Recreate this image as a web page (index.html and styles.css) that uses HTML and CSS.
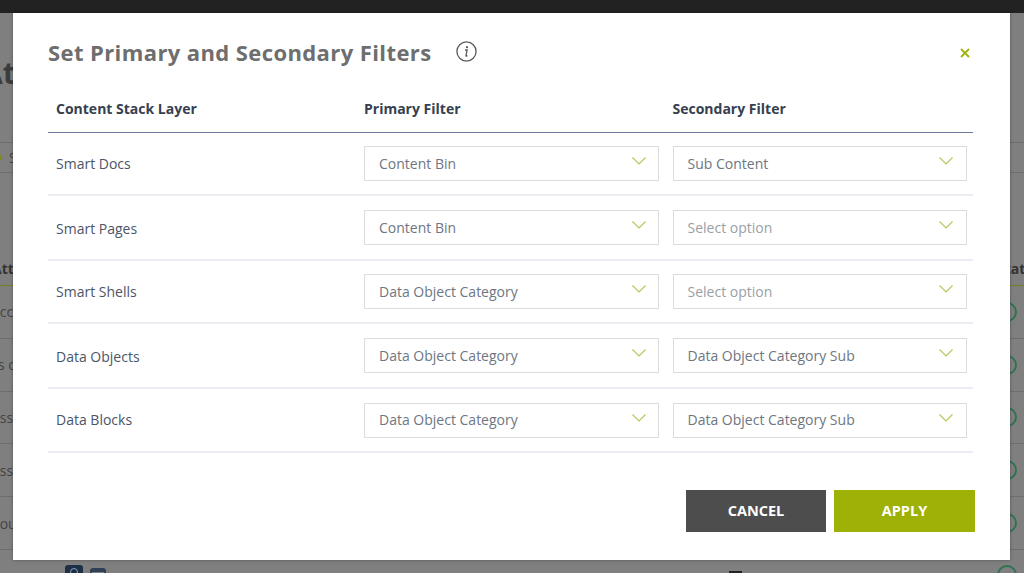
FILE: index.html
```html
<!DOCTYPE html>
<html lang="en">
<head>
<meta charset="utf-8">
<title>Set Primary and Secondary Filters</title>
<link rel="stylesheet" href="styles.css">
</head>
<body>
<div class="page">
  <div class="topbar"></div>
  <h1 class="bg-title">Attributes</h1>
  <div class="bg-filter"><span class="bg-dot"></span><span>Search</span></div>
  <div class="bg-table">
    <div class="bg-head"><span>Attribute</span><span class="bg-status">Status</span></div>
    <div class="bg-row"><span class="i9">Account</span><span class="bg-circle"></span></div>
    <div class="bg-row"><span class="i6">Is open</span><span class="bg-circle"></span></div>
    <div class="bg-row"><span class="i9">Assets</span><span class="bg-circle"></span></div>
    <div class="bg-row"><span class="i9">Assets</span><span class="bg-circle"></span></div>
    <div class="bg-row"><span class="i8">Source</span><span class="bg-circle"></span></div>
  </div>
  <div class="bg-last">
    <span class="bg-icon dark"><span class="bg-glyph"></span></span><span class="bg-icon save"></span><span class="bg-spacer"></span><span class="bg-bar"></span><span class="bg-circle"></span>
  </div>
</div>

<div class="modal">
  <header class="modal-head">
    <h2 class="modal-title">Set Primary and Secondary Filters</h2>
    <svg class="info" viewBox="0 0 21 21" width="21" height="21" aria-hidden="true">
      <circle cx="10.5" cy="10.5" r="9.6" fill="none" stroke="#5a5a5a" stroke-width="1.3"/>
      <circle cx="11" cy="6.2" r="1.1" fill="#5a5a5a"/>
      <path d="M9 9h2.1l-1.1 5.6q-.1.7.5.5l.9-.5" fill="none" stroke="#5a5a5a" stroke-width="1.3"/>
    </svg>
    <svg class="close" viewBox="0 0 10 10" width="10" height="10" aria-hidden="true">
      <path d="M1 1l8 8M9 1l-8 8" stroke="#a2b50f" stroke-width="1.9" fill="none"/>
    </svg>
  </header>

  <div class="grid">
    <div class="row row-head">
      <div class="cell">Content Stack Layer</div>
      <div class="cell">Primary Filter</div>
      <div class="cell">Secondary Filter</div>
    </div>
    <div class="row r1">
      <div class="cell">Smart Docs</div>
      <div class="select">Content Bin<svg class="chev" viewBox="0 0 14 8" width="14" height="8"><path d="M.5.5l6.5 6.5 6.5-6.5" fill="none" stroke="#b3c95a" stroke-width="1.2"/></svg></div>
      <div class="select">Sub Content<svg class="chev" viewBox="0 0 14 8" width="14" height="8"><path d="M.5.5l6.5 6.5 6.5-6.5" fill="none" stroke="#b3c95a" stroke-width="1.2"/></svg></div>
    </div>
    <div class="row r2">
      <div class="cell">Smart Pages</div>
      <div class="select">Content Bin<svg class="chev" viewBox="0 0 14 8" width="14" height="8"><path d="M.5.5l6.5 6.5 6.5-6.5" fill="none" stroke="#b3c95a" stroke-width="1.2"/></svg></div>
      <div class="select placeholder">Select option<svg class="chev" viewBox="0 0 14 8" width="14" height="8"><path d="M.5.5l6.5 6.5 6.5-6.5" fill="none" stroke="#b3c95a" stroke-width="1.2"/></svg></div>
    </div>
    <div class="row r3">
      <div class="cell">Smart Shells</div>
      <div class="select">Data Object Category<svg class="chev" viewBox="0 0 14 8" width="14" height="8"><path d="M.5.5l6.5 6.5 6.5-6.5" fill="none" stroke="#b3c95a" stroke-width="1.2"/></svg></div>
      <div class="select placeholder">Select option<svg class="chev" viewBox="0 0 14 8" width="14" height="8"><path d="M.5.5l6.5 6.5 6.5-6.5" fill="none" stroke="#b3c95a" stroke-width="1.2"/></svg></div>
    </div>
    <div class="row r2">
      <div class="cell">Data Objects</div>
      <div class="select">Data Object Category<svg class="chev" viewBox="0 0 14 8" width="14" height="8"><path d="M.5.5l6.5 6.5 6.5-6.5" fill="none" stroke="#b3c95a" stroke-width="1.2"/></svg></div>
      <div class="select">Data Object Category Sub<svg class="chev" viewBox="0 0 14 8" width="14" height="8"><path d="M.5.5l6.5 6.5 6.5-6.5" fill="none" stroke="#b3c95a" stroke-width="1.2"/></svg></div>
    </div>
    <div class="row r4">
      <div class="cell">Data Blocks</div>
      <div class="select">Data Object Category<svg class="chev" viewBox="0 0 14 8" width="14" height="8"><path d="M.5.5l6.5 6.5 6.5-6.5" fill="none" stroke="#b3c95a" stroke-width="1.2"/></svg></div>
      <div class="select">Data Object Category Sub<svg class="chev" viewBox="0 0 14 8" width="14" height="8"><path d="M.5.5l6.5 6.5 6.5-6.5" fill="none" stroke="#b3c95a" stroke-width="1.2"/></svg></div>
    </div>
  </div>

  <footer class="actions">
    <button class="btn cancel" type="button">CANCEL</button>
    <button class="btn apply" type="button">APPLY</button>
  </footer>
</div>
</body>
</html>
```
FILE: styles.css
```css
* { box-sizing: border-box; }
html, body { margin: 0; height: 100%; overflow: hidden; }
body { background: #7f7f7f; font-family: "Open Sans", "Liberation Sans", sans-serif; }

.page { height: 573px; overflow: hidden; color: #333; }
.topbar { height: 13px; background: #222; }
.bg-title { margin: 39px 0 0; height: 90px; font-size: 30px; line-height: 42px; font-weight: 700; color: #3c3c3c; text-indent: -18px; }
.bg-filter { height: 31px; border-top: 1px solid #6d6d6d; border-bottom: 1px solid #6d6d6d; display: flex; align-items: center; gap: 7px; font-size: 14px; color: #444; }
.bg-dot { width: 5px; height: 5px; border-radius: 50%; background: #7f8c12; margin-left: -3px; }
.bg-table { margin-top: 80px; }
.bg-head { height: 33px; padding-bottom: 2px; display: flex; justify-content: space-between; align-items: center; border-bottom: 1px solid #76801e; font-size: 14px; font-weight: 700; color: #333; text-indent: -8px; overflow: hidden; }
.bg-status { text-indent: 0; margin-right: -17px; width: 44px; flex: none; }
.bg-row { height: 52.8px; display: flex; justify-content: space-between; align-items: center; border-bottom: 1px solid #6d6d6d; font-size: 14px; color: #444; padding-right: 7px; overflow: hidden; }
.i9 { text-indent: -9px; }
.i8 { text-indent: -8px; }
.i6 { text-indent: -6px; }
.bg-circle { width: 20px; height: 20px; border-radius: 50%; border: 2px solid #2f7350; flex: none; }
.bg-last { display: flex; align-items: flex-start; gap: 7px; padding: 15px 7px 0 65px; }
.bg-icon { width: 18px; height: 16px; border-radius: 3px; flex: none; }
.bg-icon.dark { background: #1d2f47; display: flex; justify-content: center; padding-top: 3px; }
.bg-glyph { width: 8px; height: 8px; border-radius: 50%; border: 1.5px solid #8fa0b5; }
.bg-icon.save { width: 16px; margin-top: 3px; background: #7f7f7f; border: 2px solid #2f3f55; border-top-width: 4px; }
.bg-spacer { flex: 1; }
.bg-bar { width: 13px; height: 2px; margin-top: 6px; margin-right: 248px; background: #222; }

.modal { position: absolute; left: 13px; top: 13px; width: 997px; height: 547px; background: #fff; box-shadow: 0 0 3px rgba(0,0,0,.35); padding: 0 35px; }
.modal-head { height: 75px; display: flex; align-items: center; padding-top: 3px; }
.modal-title { margin: 0; font-size: 22px; letter-spacing: .4px; line-height: 30px; font-weight: 700; color: #6e6e6e; }
.info { margin: -2px 0 0 24px; flex: none; }
.close { margin-left: auto; margin-right: 5px; margin-top: 1px; flex: none; }

.grid { width: 925px; }
.row { display: grid; grid-template-columns: 308px 308.5px 308.5px; align-items: center; height: 64px; border-bottom: 2px solid #ececf2; padding-left: 8px; font-size: 14px; color: #4a5568; }
.row-head { height: 45px; border-bottom: 1.5px solid #6a7a99; font-weight: 700; color: #36404f; padding-bottom: 4px; }
.r1 { height: 63px; }
.r2 { height: 65px; }
.r2 .cell { padding-top: 1px; }
.r3 { height: 63px; }
.r4 { height: 64px; }
.r4 .select { padding-bottom: 1px; }
.r4 .cell { padding-bottom: 1px; }
.select { position: relative; height: 35px; width: 295px; border: 1.5px solid #dcdcdc; display: flex; align-items: center; padding-left: 14px; color: #6e7681; font-size: 14px; }
.row > .select:last-child { width: 294px; }
.placeholder { color: #9a9fa6; }
.chev { position: absolute; right: 12.5px; top: 10px; }

.actions { display: flex; justify-content: flex-end; gap: 8px; margin-top: 37px; }
.btn { width: 141px; height: 42px; border: 1px solid transparent; font-family: inherit; font-size: 14.5px; font-weight: 700; color: #fff; padding: 0 0 2px; }
.cancel { background: #4d4d4d; width: 140px; }
.apply { background: #9db106; }
```
